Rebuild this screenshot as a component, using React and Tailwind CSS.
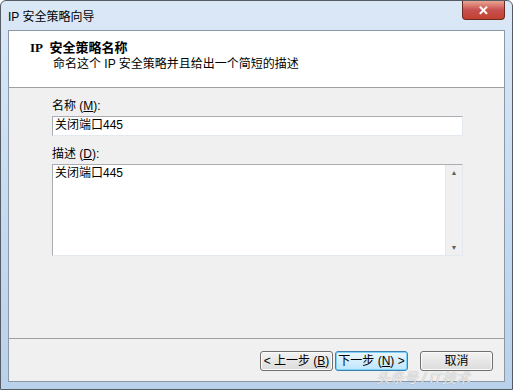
import React from 'react';

const font = { fontFamily: '"Liberation Sans", "Noto Sans CJK SC", sans-serif' };

function Btn({ children, focused }) {
  return (
    <div
      className={`w-[73px] h-[20px] rounded-[3px] border flex items-center justify-center text-[12px] text-black bg-gradient-to-b ${
        focused
          ? 'border-[#3c7fb1] from-[#eaf6fd] to-[#bee6fd] shadow-[inset_0_0_0_1px_#7fd1f5]'
          : 'border-[#707070] from-[#f2f2f2] to-[#dcdcdc] shadow-[inset_0_0_0_1px_#fbfbfb]'
      }`}
    >
      {children}
    </div>
  );
}

export default function App() {
  return (
    <div className="w-[513px] h-[390px] bg-white" style={font}>
      <div className="w-full h-full flex flex-col rounded-t-[6px] border border-[#555c66] bg-gradient-to-b from-[#dbe8f6] via-[#c7dcf1] to-[#b9d1ea]">
        {/* Title bar */}
        <div className="h-[29px] flex items-start justify-between">
          <div className="pl-[7px] pt-[7px] text-[12px] text-black">IP 安全策略向导</div>
          <div className="mr-[7px] w-[43px] h-[19px] rounded-b-[4px] border border-[#6b2a22] border-t-0 bg-gradient-to-b from-[#e8a493] via-[#c75050] to-[#c2402e] flex items-center justify-center">
            <span className="text-white text-[13px] font-bold leading-none">✕</span>
          </div>
        </div>

        {/* Client */}
        <div className="flex-1 mx-[7px] mb-[7px] border border-[#8a98a8] bg-[#f0f0f0] flex flex-col">
          {/* Header */}
          <div className="h-[57px] bg-white border-b border-[#a0a0a0] pt-[9px] pl-[21px]">
            <div className="text-[13px] font-bold text-black leading-[16px]" style={{ fontFamily: '"Liberation Serif", "Noto Sans CJK SC", serif' }}>
              IP&nbsp; 安全策略名称
            </div>
            <div className="text-[12px] text-black leading-[16px] pl-[23px]">命名这个 IP 安全策略并且给出一个简短的描述</div>
          </div>

          {/* Body */}
          <div className="flex-1 pl-[43px] pr-[41px] pt-[10px]">
            <div className="text-[12px] leading-[16px] text-black">名称 (<u>M</u>):</div>
            <div className="mt-[2px] h-[20px] bg-white border border-[#abadb3] border-r-[#e3e9ef] border-b-[#e3e9ef] px-[2px] text-[12px] leading-[17px] text-black">
              关闭端口445
            </div>
            <div className="mt-[10px] text-[12px] leading-[16px] text-black">描述 (<u>D</u>):</div>
            <div className="mt-[2px] h-[92px] bg-white border border-[#abadb3] border-r-[#e3e9ef] border-b-[#e3e9ef] flex">
              <div className="flex-1 px-[2px] text-[12px] leading-[17px] text-black">关闭端口445</div>
              <div className="w-[17px] bg-[#f0f0f0] border-l border-[#e8e8e8] flex flex-col justify-between items-center py-[4px] text-[7px] text-[#606060] leading-none">
                <span>▲</span>
                <span>▼</span>
              </div>
            </div>
          </div>

          {/* Footer */}
          <div className="h-[43px] border-t border-[#a0a0a0] flex items-start justify-end pt-[12px] pr-[11px]">
            <Btn>&lt; 上一步 (<u>B</u>)</Btn>
            <div className="w-[2px]" />
            <Btn focused>下一步 (<u>N</u>) &gt;</Btn>
            <div className="w-[12px]" />
            <div className="relative">
              <Btn>取消</Btn>
              <div className="absolute left-[-44px] top-[19px] whitespace-nowrap text-[14px] leading-[16px] italic text-white/80 [text-shadow:0_0_1px_#8a8a8a]">
                头条号 / IT技术
              </div>
            </div>
          </div>
        </div>
      </div>
    </div>
  );
}
